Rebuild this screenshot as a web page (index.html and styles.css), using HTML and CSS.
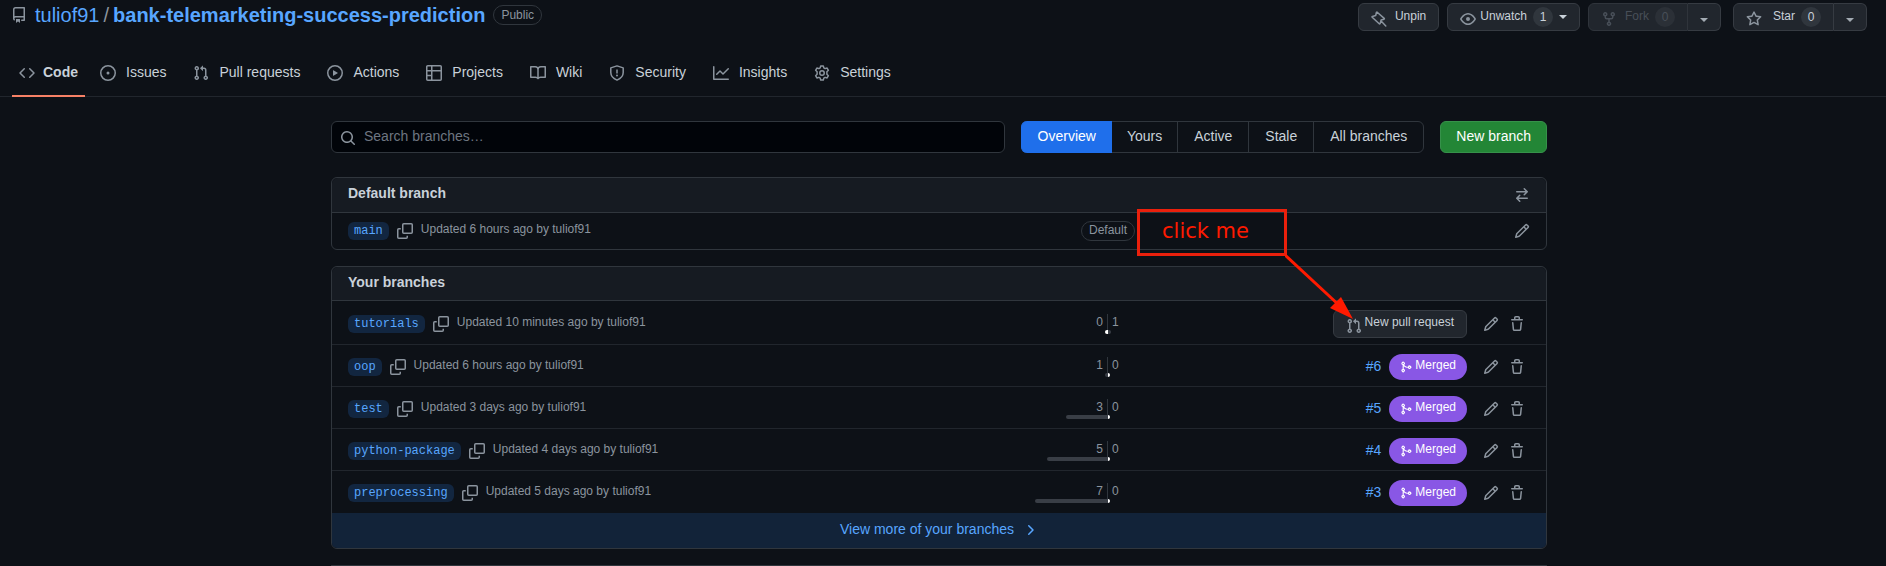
FILE: index.html
```html
<!DOCTYPE html>
<html lang="en">
<head>
<meta charset="utf-8">
<title>Branches · tuliof91/bank-telemarketing-success-prediction</title>
<link rel="stylesheet" href="styles.css">
</head>
<body>
<svg class="sprite" aria-hidden="true">
  <symbol id="i-repo" viewBox="0 0 16 16"><path d="M2 2.5A2.5 2.5 0 014.5 0h8.75a.75.75 0 01.75.75v12.5a.75.75 0 01-.75.75h-2.5a.75.75 0 110-1.5h1.75v-2h-8a1 1 0 00-.714 1.7.75.75 0 01-1.072 1.05A2.495 2.495 0 012 11.500v-9zm10.500-1V9h-8c-.356 0-.694.074-1 .208V2.500a1 1 0 011-1h8zM5 12.250v3.250a.25.25 0 00.4.2l1.450-1.087a.25.25 0 01.3 0L8.600 15.700a.25.25 0 00.4-.2v-3.250a.25.25 0 00-.25-.25h-3.500a.25.25 0 00-.25.25z"/></symbol>
  <symbol id="i-code" viewBox="0 0 16 16"><path d="M4.720 3.220a.75.75 0 011.060 1.060L2.060 8l3.720 3.720a.75.75 0 11-1.060 1.060L.47 8.530a.75.75 0 010-1.060l4.250-4.250zm6.560 0a.75.75 0 10-1.060 1.060L13.940 8l-3.720 3.720a.75.75 0 101.060 1.060l4.250-4.250a.75.75 0 000-1.060l-4.250-4.250z"/></symbol>
  <symbol id="i-issue" viewBox="0 0 16 16"><path d="M8 9.500a1.500 1.500 0 100-3 1.500 1.500 0 000 3z"/><path d="M8 0a8 8 0 100 16A8 8 0 008 0zM1.500 8a6.500 6.500 0 1113 0 6.500 6.500 0 01-13 0z"/></symbol>
  <symbol id="i-pr" viewBox="0 0 16 16"><path d="M7.177 3.073L9.573.677A.25.25 0 0110 .854v4.792a.25.25 0 01-.427.177L7.177 3.427a.25.25 0 010-.354zM3.750 2.500a.75.75 0 100 1.500.75.75 0 000-1.500zm-2.250.75a2.250 2.250 0 113 2.122v5.256a2.251 2.251 0 11-1.500 0V5.372A2.250 2.250 0 011.500 3.250zM11 2.500h-1V4h1a1 1 0 011 1v5.628a2.251 2.251 0 101.500 0V5A2.500 2.500 0 0011 2.500zm1 10.250a.75.75 0 111.500 0 .75.75 0 01-1.500 0zM3.750 12a.75.75 0 100 1.500.75.75 0 000-1.500z"/></symbol>
  <symbol id="i-play" viewBox="0 0 16 16"><path d="M1.500 8a6.500 6.500 0 1113 0 6.500 6.500 0 01-13 0zM8 0a8 8 0 100 16A8 8 0 008 0zM6.379 5.227A.25.25 0 006 5.442v5.117a.25.25 0 00.379.214l4.264-2.559a.25.25 0 000-.428L6.379 5.227z"/></symbol>
  <symbol id="i-table" viewBox="0 0 16 16"><path fill="none" stroke="currentColor" stroke-width="1.500" d="M1.750.75h12.500a1 1 0 011 1v12.500a1 1 0 01-1 1H1.750a1 1 0 01-1-1V1.750a1 1 0 011-1zM.75 5.750h14.500M5.750.75v14.500M.75 10.500h5"/></symbol>
  <symbol id="i-book" viewBox="0 0 16 16"><path fill="none" stroke="currentColor" stroke-width="1.500" stroke-linejoin="round" d="M.75 1.750h4.500A2.750 2.750 0 018 4.500v9c-.5-.8-1.400-1.250-2.500-1.250H.75zM15.250 1.750h-4.500A2.750 2.750 0 008 4.500v9c.5-.8 1.400-1.250 2.500-1.250h4.750z"/></symbol>
  <symbol id="i-shield" viewBox="0 0 16 16"><path fill="none" stroke="currentColor" stroke-width="1.500" stroke-linejoin="round" d="M8 .9l6.200 2V7.500c0 3.500-2.500 6-6.200 7.600C4.300 13.500 1.800 11 1.800 7.500V2.900z"/><path d="M7.250 4.500h1.500v4h-1.500zM8 9.600a1 1 0 110 2 1 1 0 010-2z"/></symbol>
  <symbol id="i-graph" viewBox="0 0 16 16"><path d="M1.500 1.750a.75.75 0 00-1.500 0v12.500c0 .414.336.75.75.75h14.500a.75.75 0 000-1.500H1.500V1.750zm14.280 2.530a.75.75 0 00-1.060-1.060L10 7.940 7.530 5.470a.75.75 0 00-1.060 0L3.220 8.720a.75.75 0 001.060 1.060L7 7.060l2.470 2.470a.75.75 0 001.060 0l5.250-5.250z"/></symbol>
  <symbol id="i-gear" viewBox="0 0 16 16"><path fill="none" stroke="currentColor" stroke-width="1.500" stroke-linejoin="round" d="M6.700.9h2.600l.5 2 1.300.75 2-.6 1.300 2.250-1.500 1.450v2.500l1.500 1.450-1.300 2.250-2-.6-1.300.75-.5 2H6.700l-.5-2-1.300-.75-2 .6-1.300-2.250 1.500-1.450v-2.500L1.600 5.300l1.300-2.250 2 .6 1.300-.75z"/><circle cx="8" cy="8" r="2.250" fill="none" stroke="currentColor" stroke-width="1.500"/></symbol>
  <symbol id="i-pin" viewBox="0 0 16 16"><path fill="none" stroke="currentColor" stroke-width="1.500" stroke-linejoin="round" stroke-linecap="round" d="M6.200 1.200l7 6.200c.3.300.2.700-.2.800l-2.900.8-1 3.600c-.1.400-.6.500-.9.200L1.200 6.300c-.3-.3-.2-.8.2-.9l3.300-.9.700-3c.1-.4.500-.5.8-.3zM10.100 10l4.700 4.900"/></symbol>
  <symbol id="i-eye" viewBox="0 0 16 16"><path d="M1.679 7.932c.412-.621 1.242-1.750 2.366-2.717C5.175 4.242 6.527 3.500 8 3.500c1.473 0 2.824.742 3.955 1.715 1.124.967 1.954 2.096 2.366 2.717a.119.119 0 010 .136c-.412.621-1.242 1.750-2.366 2.717C10.825 11.758 9.473 12.500 8 12.500c-1.473 0-2.824-.742-3.955-1.715C2.920 9.818 2.090 8.690 1.679 8.068a.119.119 0 010-.136zM8 2c-1.981 0-3.670.992-4.933 2.078C1.797 5.169.88 6.423.43 7.100a1.619 1.619 0 000 1.798c.45.678 1.367 1.932 2.637 3.024C4.329 13.008 6.019 14 8 14c1.981 0 3.670-.992 4.933-2.078 1.270-1.091 2.187-2.345 2.637-3.023a1.619 1.619 0 000-1.798c-.45-.678-1.367-1.932-2.637-3.023C11.671 2.992 9.981 2 8 2zm0 8a2 2 0 100-4 2 2 0 000 4z"/></symbol>
  <symbol id="i-fork" viewBox="0 0 16 16"><path d="M5 3.250a.75.75 0 11-1.500 0 .75.75 0 011.500 0zm0 2.122a2.250 2.250 0 10-1.500 0v.878A2.250 2.250 0 005.750 8.500h1.500v2.128a2.251 2.251 0 101.500 0V8.500h1.500a2.250 2.250 0 002.250-2.250v-.878a2.250 2.250 0 10-1.500 0v.878a.75.75 0 01-.75.75h-4.500A.75.75 0 015 6.250v-.878zm3.750 7.378a.75.75 0 11-1.500 0 .75.75 0 011.500 0zm3-8.750a.75.75 0 100-1.500.75.75 0 000 1.500z"/></symbol>
  <symbol id="i-star" viewBox="0 0 16 16"><path d="M8 .25a.75.75 0 01.673.418l1.882 3.815 4.210.612a.75.75 0 01.416 1.279l-3.046 2.970.719 4.192a.75.75 0 01-1.088.791L8 12.347l-3.766 1.980a.75.75 0 01-1.088-.79l.72-4.194L.818 6.374a.75.75 0 01.416-1.280l4.210-.611L7.327.668A.75.75 0 018 .25zm0 2.445L6.615 5.500a.75.75 0 01-.564.41l-3.097.45 2.240 2.184a.75.75 0 01.216.664l-.528 3.084 2.769-1.456a.75.75 0 01.698 0l2.770 1.456-.53-3.084a.75.75 0 01.216-.664l2.240-2.183-3.096-.45a.75.75 0 01-.564-.41L8 2.694z"/></symbol>
  <symbol id="i-search" viewBox="0 0 16 16"><path d="M11.500 7a4.499 4.499 0 11-8.998 0A4.499 4.499 0 0111.500 7zm-.82 4.740a6 6 0 111.060-1.060l3.040 3.040a.75.75 0 11-1.060 1.060l-3.040-3.040z"/></symbol>
  <symbol id="i-swap" viewBox="0 0 16 16"><path d="M5.220 14.780a.75.75 0 001.060-1.060L4.560 12h8.690a.75.75 0 000-1.500H4.560l1.720-1.720a.75.75 0 00-1.060-1.060l-3 3a.75.75 0 000 1.060l3 3zm5.560-6.500a.75.75 0 11-1.060-1.060l1.720-1.720H2.750a.75.75 0 010-1.500h8.690L9.720 2.280a.75.75 0 011.060-1.060l3 3a.75.75 0 010 1.060l-3 3z"/></symbol>
  <symbol id="i-pencil" viewBox="0 0 16 16"><path d="M11.013 1.427a1.750 1.750 0 012.474 0l1.086 1.086a1.750 1.750 0 010 2.474l-8.610 8.610c-.21.21-.47.364-.756.445l-3.251.93a.75.75 0 01-.927-.928l.929-3.250a1.750 1.750 0 01.445-.758l8.610-8.610zm1.414 1.060a.25.25 0 00-.354 0L10.811 3.750l1.439 1.440 1.263-1.263a.25.25 0 000-.354l-1.086-1.086zM11.189 6.250L9.750 4.810l-6.286 6.287a.25.25 0 00-.064.108l-.558 1.953 1.953-.558a.249.249 0 00.108-.064l6.286-6.286z"/></symbol>
  <symbol id="i-trash" viewBox="0 0 16 16"><path d="M6.500 1.750a.25.25 0 01.25-.25h2.500a.25.25 0 01.25.25V3h-3V1.750zm4.500 0V3h2.250a.75.75 0 010 1.500H2.750a.75.75 0 010-1.500H5V1.750C5 .784 5.784 0 6.750 0h2.500C10.216 0 11 .784 11 1.750zM4.496 6.675a.75.75 0 10-1.492.15l.66 6.600A1.750 1.750 0 005.405 15h5.190c.9 0 1.652-.681 1.741-1.576l.66-6.600a.75.75 0 00-1.492-.149l-.66 6.600a.25.25 0 01-.249.225h-5.190a.25.25 0 01-.249-.225l-.66-6.600z"/></symbol>
  <symbol id="i-copy" viewBox="0 0 16 16"><path fill="none" stroke="currentColor" stroke-width="1.500" d="M5.750 1.750a1 1 0 011-1h7.500a1 1 0 011 1v7.500a1 1 0 01-1 1h-7.500a1 1 0 01-1-1zM3.750 5.750h-2a1 1 0 00-1 1v7.500a1 1 0 001 1h7.500a1 1 0 001-1v-1.500"/></symbol>
  <symbol id="i-merge" viewBox="0 0 16 16"><path d="M5 3.254V3.250v.005a.75.75 0 110-.005v.004zm.45 1.900a2.250 2.250 0 10-1.950.218v5.256a2.250 2.250 0 101.500 0V7.123A5.735 5.735 0 009.250 9h1.378a2.251 2.251 0 100-1.500H9.250a4.250 4.250 0 01-3.800-2.346zM12.750 9a.75.75 0 100-1.500.75.75 0 000 1.500zm-8.500 4.500a.75.75 0 100-1.500.75.75 0 000 1.500z"/></symbol>
  <symbol id="i-chev" viewBox="0 0 16 16"><path d="M6.220 3.220a.75.75 0 011.060 0l4.250 4.250a.75.75 0 010 1.060l-4.250 4.250a.75.75 0 01-1.060-1.060L9.940 8 6.220 4.280a.75.75 0 010-1.060z"/></symbol>
</svg>

<header class="repo-head">
  <div class="repo-bar">
    <h1 class="repo-title">
      <svg class="icon"><use href="#i-repo"/></svg>
      <a href="#">tuliof91</a><span class="slash">/</span><a class="repo-name" href="#">bank-telemarketing-success-prediction</a>
      <span class="label">Public</span>
    </h1>
    <div class="repo-actions">
      <button class="btn btn-pin"><svg class="icon"><use href="#i-pin"/></svg><span>Unpin</span></button>
      <button class="btn btn-watch"><svg class="icon"><use href="#i-eye"/></svg><span>Unwatch</span><span class="count">1</span><i class="caret"></i></button>
      <div class="split">
        <button class="btn" disabled><svg class="icon"><use href="#i-fork"/></svg><span>Fork</span><span class="count">0</span></button>
        <button class="btn btn-caret" aria-label="Fork options"><i class="caret"></i></button>
      </div>
      <div class="split split-star">
        <button class="btn"><svg class="icon"><use href="#i-star"/></svg><span>Star</span><span class="count">0</span></button>
        <button class="btn btn-caret" aria-label="Star lists"><i class="caret"></i></button>
      </div>
    </div>
  </div>
  <nav class="tabs" aria-label="Repository">
    <a class="tab current" href="#"><svg class="icon"><use href="#i-code"/></svg>Code</a>
    <a class="tab" href="#"><svg class="icon"><use href="#i-issue"/></svg>Issues</a>
    <a class="tab" href="#"><svg class="icon"><use href="#i-pr"/></svg>Pull requests</a>
    <a class="tab" href="#"><svg class="icon"><use href="#i-play"/></svg>Actions</a>
    <a class="tab" href="#"><svg class="icon"><use href="#i-table"/></svg>Projects</a>
    <a class="tab" href="#"><svg class="icon"><use href="#i-book"/></svg>Wiki</a>
    <a class="tab" href="#"><svg class="icon"><use href="#i-shield"/></svg>Security</a>
    <a class="tab" href="#"><svg class="icon"><use href="#i-graph"/></svg>Insights</a>
    <a class="tab" href="#"><svg class="icon"><use href="#i-gear"/></svg>Settings</a>
  </nav>
</header>

<main class="page">
  <div class="toolbar">
    <label class="search">
      <svg class="icon"><use href="#i-search"/></svg>
      <input type="search" placeholder="Search branches…" aria-label="Search branches">
    </label>
    <nav class="filters" aria-label="Branch filters">
      <a class="filter selected" href="#">Overview</a>
      <a class="filter" href="#">Yours</a>
      <a class="filter" href="#">Active</a>
      <a class="filter" href="#">Stale</a>
      <a class="filter" href="#">All branches</a>
    </nav>
    <button class="btn-new">New branch</button>
  </div>

  <section class="box">
    <div class="box-head"><h2>Default branch</h2><button class="icon-btn flush" aria-label="Switch default branch"><svg class="icon"><use href="#i-swap"/></svg></button></div>
    <ul class="rows">
      <li class="row row-default">
        <div class="info"><a class="branch" href="#">main</a><button class="copy" aria-label="Copy"><svg class="icon"><use href="#i-copy"/></svg></button><span class="updated">Updated 6 hours ago by tuliof91</span></div>
        <div class="middle"><span class="label">Default</span></div>
        <div class="actions"><button class="icon-btn flush" aria-label="Rename"><svg class="icon"><use href="#i-pencil"/></svg></button></div>
      </li>
    </ul>
    <div class="note">click me
      <svg class="arrow" viewBox="0 0 70 66"><path d="M0 0L56 52" stroke="#ff1a00" stroke-width="3"/><path d="M68 64L45 53L56 42z" fill="#ff1a00"/></svg>
    </div>
  </section>

  <section class="box">
    <div class="box-head"><h2>Your branches</h2></div>
    <ul class="rows">
      <li class="row row-tall">
        <div class="info"><a class="branch" href="#">tutorials</a><button class="copy" aria-label="Copy"><svg class="icon"><use href="#i-copy"/></svg></button><span class="updated">Updated 10 minutes ago by tuliof91</span></div>
        <div class="meter"><div class="side behind"><span>0</span><i class="bar none" style="width:3px"></i></div><div class="side ahead"><span>1</span><i class="bar" style="width:3px"></i></div></div>
        <div class="actions"><button class="btn btn-pr"><svg class="icon"><use href="#i-pr"/></svg><span>New pull request</span></button><button class="icon-btn" aria-label="Rename"><svg class="icon"><use href="#i-pencil"/></svg></button><button class="icon-btn" aria-label="Delete"><svg class="icon"><use href="#i-trash"/></svg></button></div>
      </li>
      <li class="row">
        <div class="info"><a class="branch" href="#">oop</a><button class="copy" aria-label="Copy"><svg class="icon"><use href="#i-copy"/></svg></button><span class="updated">Updated 6 hours ago by tuliof91</span></div>
        <div class="meter"><div class="side behind"><span>1</span><i class="bar" style="width:3px"></i></div><div class="side ahead"><span>0</span><i class="bar none" style="width:2px"></i></div></div>
        <div class="actions"><a class="num" href="#">#6</a><a class="state" href="#"><svg class="icon"><use href="#i-merge"/></svg><span>Merged</span></a><button class="icon-btn" aria-label="Rename"><svg class="icon"><use href="#i-pencil"/></svg></button><button class="icon-btn" aria-label="Delete"><svg class="icon"><use href="#i-trash"/></svg></button></div>
      </li>
      <li class="row">
        <div class="info"><a class="branch" href="#">test</a><button class="copy" aria-label="Copy"><svg class="icon"><use href="#i-copy"/></svg></button><span class="updated">Updated 3 days ago by tuliof91</span></div>
        <div class="meter"><div class="side behind"><span>3</span><i class="bar" style="width:42px"></i></div><div class="side ahead"><span>0</span><i class="bar none" style="width:2px"></i></div></div>
        <div class="actions"><a class="num" href="#">#5</a><a class="state" href="#"><svg class="icon"><use href="#i-merge"/></svg><span>Merged</span></a><button class="icon-btn" aria-label="Rename"><svg class="icon"><use href="#i-pencil"/></svg></button><button class="icon-btn" aria-label="Delete"><svg class="icon"><use href="#i-trash"/></svg></button></div>
      </li>
      <li class="row">
        <div class="info"><a class="branch" href="#">python-package</a><button class="copy" aria-label="Copy"><svg class="icon"><use href="#i-copy"/></svg></button><span class="updated">Updated 4 days ago by tuliof91</span></div>
        <div class="meter"><div class="side behind"><span>5</span><i class="bar" style="width:61px"></i></div><div class="side ahead"><span>0</span><i class="bar none" style="width:2px"></i></div></div>
        <div class="actions"><a class="num" href="#">#4</a><a class="state" href="#"><svg class="icon"><use href="#i-merge"/></svg><span>Merged</span></a><button class="icon-btn" aria-label="Rename"><svg class="icon"><use href="#i-pencil"/></svg></button><button class="icon-btn" aria-label="Delete"><svg class="icon"><use href="#i-trash"/></svg></button></div>
      </li>
      <li class="row">
        <div class="info"><a class="branch" href="#">preprocessing</a><button class="copy" aria-label="Copy"><svg class="icon"><use href="#i-copy"/></svg></button><span class="updated">Updated 5 days ago by tuliof91</span></div>
        <div class="meter"><div class="side behind"><span>7</span><i class="bar" style="width:73px"></i></div><div class="side ahead"><span>0</span><i class="bar none" style="width:2px"></i></div></div>
        <div class="actions"><a class="num" href="#">#3</a><a class="state" href="#"><svg class="icon"><use href="#i-merge"/></svg><span>Merged</span></a><button class="icon-btn" aria-label="Rename"><svg class="icon"><use href="#i-pencil"/></svg></button><button class="icon-btn" aria-label="Delete"><svg class="icon"><use href="#i-trash"/></svg></button></div>
      </li>
    </ul>
    <a class="more" href="#">View more of your branches <svg class="icon"><use href="#i-chev"/></svg></a>
  </section>

  <section class="box box-next"></section>
</main>
</body>
</html>
```

FILE: styles.css
```css
* { box-sizing: border-box; }
body {
  display: flex;
  flex-direction: column;
  height: 100vh;
  margin: 0;
  background: #0d1117;
  color: #c9d1d9;
  font: 14px/21px "Liberation Sans", Arial, sans-serif;
}
a { color: #58a6ff; text-decoration: none; }
button { font: inherit; color: inherit; background: none; border: 0; padding: 0; cursor: pointer; }
h1, h2, ul { margin: 0; padding: 0; font-weight: 400; list-style: none; }
.sprite { position: absolute; width: 0; height: 0; }
.icon { width: 16px; height: 16px; fill: currentColor; fill-rule: evenodd; color: #8b949e; flex: none; display: block; }

/* Repository header */
.repo-head { flex: none; border-bottom: 1px solid #21262d; }
.repo-bar {
  display: flex;
  justify-content: space-between;
  align-items: flex-start;
  padding: 3px 19px 0 11px;
  height: 48px;
}
.repo-title { display: flex; align-items: center; font-size: 20px; line-height: 24px; }
.repo-title .icon { margin-right: 8px; }
.repo-name { font-weight: 700; }
.slash { color: #8b949e; margin: 0 4px; }
.label {
  border: 1px solid #30363d;
  border-radius: 20px;
  padding: 0 7px;
  font-size: 12px;
  line-height: 18px;
  color: #8b949e;
}
.repo-title .label { margin-left: 8px; }
.repo-actions { display: flex; gap: 8px; }
.btn {
  display: flex;
  align-items: center;
  height: 28px;
  padding: 0 12px;
  border: 1px solid #363b42;
  border-radius: 6px;
  background: #21262d;
  font-size: 12px;
  line-height: 20px;
}
.btn > span { margin-bottom: 3px; }
.btn .icon { margin: 4px 8px 0 0; }
.btn .count {
  min-width: 20px;
  margin: 0 0 0 6px;
  border-radius: 20px;
  background: #30363d;
  text-align: center;
  line-height: 20px;
}
.btn-watch .icon { margin-right: 4px; }
.caret { border: 4px solid transparent; border-top-color: currentColor; border-bottom: 0; }
.btn-watch .caret { margin-left: 6px; }
.split { display: flex; }
.split-star { margin-left: 4px; }
.split-star .icon { margin-right: 11px; }
.split .btn:first-child { border-radius: 6px 0 0 6px; }
.btn.btn-caret { border-radius: 0 6px 6px 0; border-left: 0; color: #a3abb3; }
.btn-caret .caret { margin-top: 6px; }
.btn:disabled { color: #484f58; border-color: #2f343b; }
.btn:disabled .icon { color: #484f58; }
.btn:disabled .count { background: #2b3037; }

.tabs { display: flex; gap: 11px; padding: 0 12px; height: 48px; }
.tab {
  display: flex;
  align-items: center;
  padding: 2px 8px 0;
  color: #c9d1d9;
  border-bottom: 2px solid transparent;
  margin-bottom: -1px;
}
.tab .icon { margin-right: 10px; }
.current { padding: 2px 7px 0; margin-right: -4px; font-weight: 700; border-color: #f78166; }
.current .icon { margin-right: 8px; }

/* Branch list */
.page { flex: 1; display: flex; flex-direction: column; min-height: 0; width: 100%; max-width: 1224px; margin: 0 auto; padding: 24px 8px 0 0; }
.toolbar { display: flex; gap: 16px; margin-bottom: 24px; }
.search {
  flex: 1;
  display: flex;
  align-items: center;
  height: 32px;
  padding: 0 8px;
  border: 1px solid #30363d;
  border-radius: 6px;
  background: #010409;
}
.search .icon { margin-top: 2px; }
.search input {
  flex: 1;
  min-width: 0;
  padding: 0 0 2px 8px;
  border: 0;
  outline: 0;
  background: none;
  color: #c9d1d9;
  font: inherit;
}
.search input::placeholder { color: #6e7681; opacity: 1; }
.filters { display: flex; border: 1px solid #30363d; border-radius: 6px; }
.filter { padding: 4px 16px; color: #c9d1d9; border-left: 1px solid #30363d; }
.filter.selected { margin: -1px 0 -1px -1px; padding: 5px 16px; background: #1f6feb; color: #fff; border-color: #1f6feb; border-radius: 6px 0 0 6px; }
.filter:nth-child(2) { border-left: 0; padding: 4px 15px; }
.btn-new { height: 32px; padding: 0 15px 1px; border-radius: 6px; border: 1px solid #36914a; background: #238636; color: #fff; }

.box { flex: none; position: relative; border: 1px solid #30363d; border-radius: 6px; margin-bottom: 16px; }
.box-next { flex: 1; min-height: 0; margin-bottom: 0; border-bottom: 0; border-radius: 6px 6px 0 0; background: #161b22; }
.box-head {
  display: flex;
  justify-content: space-between;
  align-items: flex-start;
  padding: 6px 16px;
  border-bottom: 1px solid #30363d;
  border-radius: 6px 6px 0 0;
  background: #161b22;
}
.box-head h2 { font-size: 14px; line-height: 21px; margin-top: -1px; margin-bottom: 1px; font-weight: 700; }
.row {
  display: grid;
  grid-template-columns: minmax(0, 1fr) 240px 302px;
  align-items: center;
  padding: 2px 16px 0;
  height: 42px;
  border-bottom: 1px solid #21262d;
}
.row-tall { height: 44px; }
.row-default { height: 36px; padding-top: 0; }
.row:last-child { border-bottom: 0; }
.info { display: flex; align-items: center; }
.branch {
  padding: 0 6px;
  border-radius: 6px;
  background: #122640;
  font: 12px/18px "Liberation Mono", monospace;
}
.copy { margin: 0 8px; }
.updated { font-size: 12px; line-height: 18px; color: #8b949e; margin-bottom: 4px; }
.middle { display: flex; justify-content: center; }
.middle .label { line-height: 16px; padding-bottom: 2px; }
.meter { display: grid; grid-template-columns: 1fr 1fr; font-size: 12px; color: #8b949e; }
.side { display: flex; flex-direction: column; line-height: 16px; }
.side span { padding: 0 4px; }
.behind { align-items: flex-end; }
.behind span { border-right: 1px solid #30363d; }
.ahead { align-items: flex-start; }
.bar { height: 4px; background: #393e46; }
.behind .bar { border-radius: 2px 0 0 2px; }
.ahead .bar { border-radius: 0 2px 2px 0; }
.bar.none { background: #fff; }
.actions { display: flex; align-items: center; justify-content: flex-end; }
.icon-btn { padding: 5px; }
.icon-btn.flush { padding: 3px 0; }
.btn-pr { margin-right: 11px; }
.btn-pr .icon { margin-right: 3px; }
.num { line-height: 20px; margin: 0 8px 2px 0; }
.state {
  display: flex;
  align-items: center;
  height: 26px;
  padding: 0 11px;
  margin-right: 11px;
  border-radius: 26px;
  background: #8957e5;
  color: #fff;
  font-size: 12px;
}
.state span { margin-bottom: 2px; }
.state .icon { width: 12px; height: 12px; margin-right: 3px; color: #fff; }
.more {
  display: flex;
  justify-content: center;
  align-items: center;
  gap: 8px;
  height: 35px;
  padding-bottom: 2px;
  border-radius: 0 0 5px 5px;
  background: #122339;
}
.more .icon { color: #58a6ff; }

/* Callout drawn over the branch list */
.note {
  position: absolute;
  top: 31px;
  right: 259px;
  width: 150px;
  height: 47px;
  padding-left: 22px;
  border: 3px solid #ea200c;
  color: #ff1a00;
  font: 21px/38px "DejaVu Sans", sans-serif;
  z-index: 1;
}
.arrow { position: absolute; left: 145px; top: 43px; width: 70px; height: 66px; }
```
